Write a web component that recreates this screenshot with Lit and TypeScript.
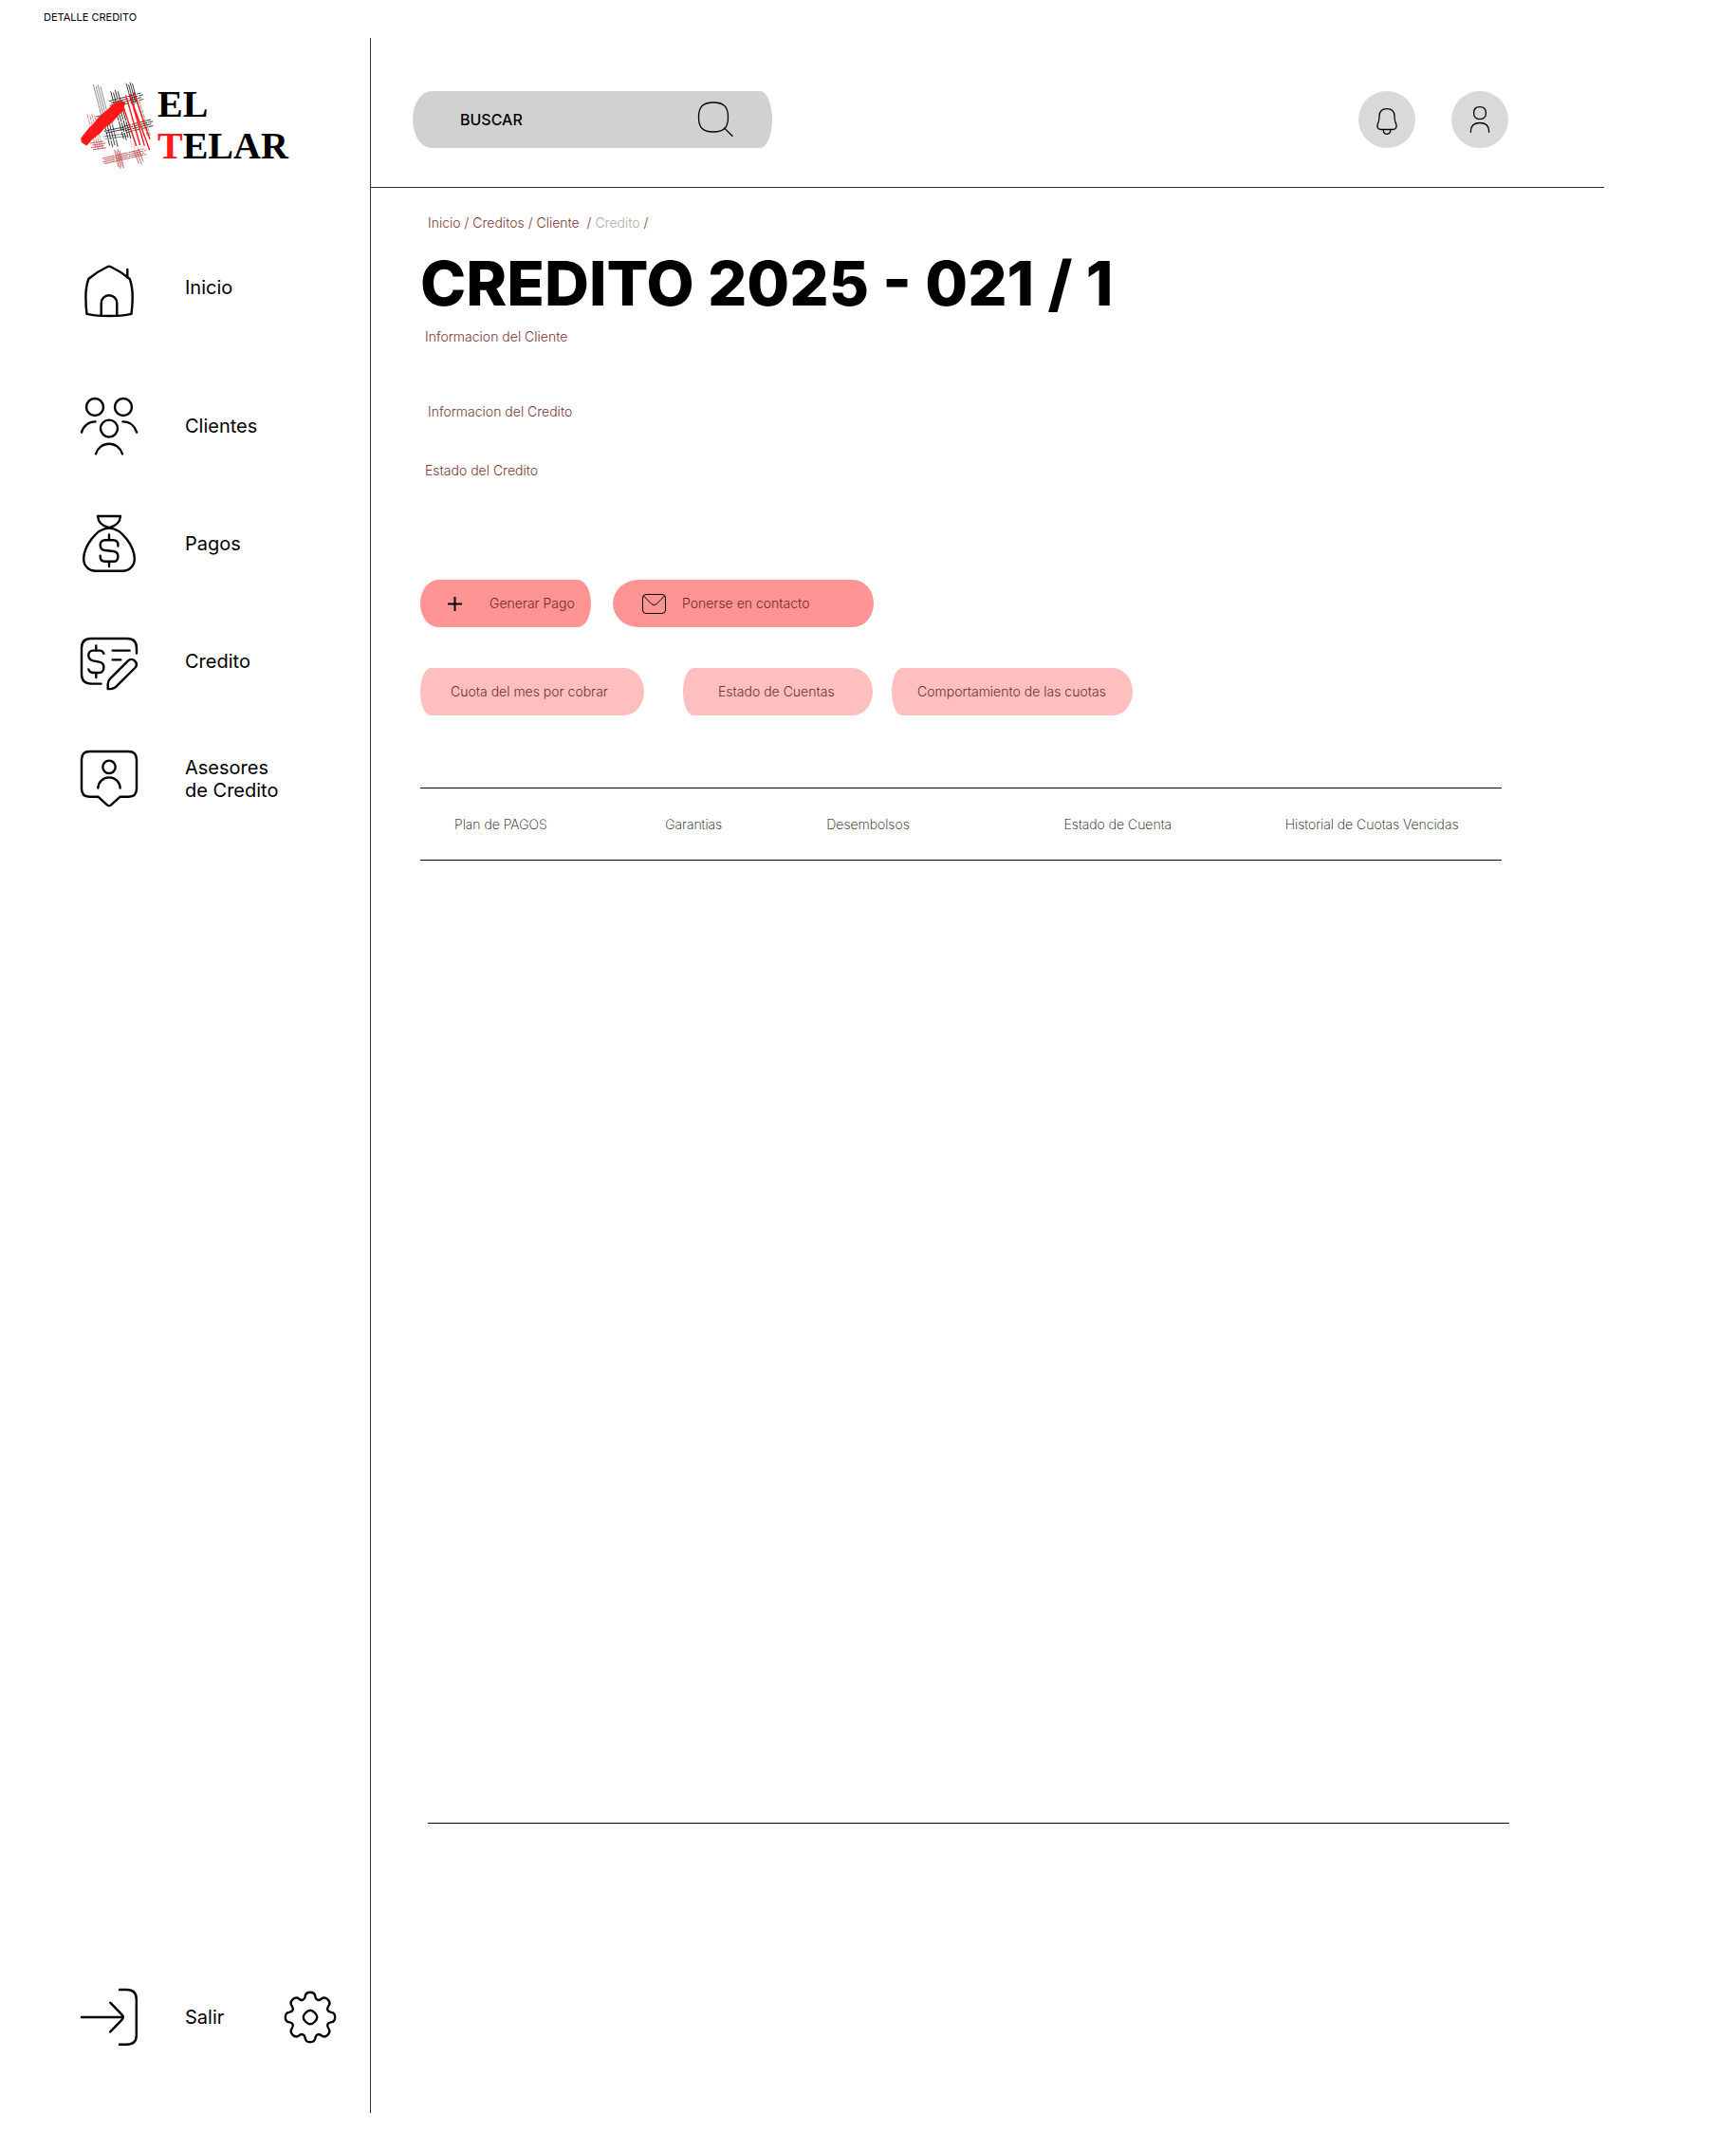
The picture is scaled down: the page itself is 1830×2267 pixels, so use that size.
import { LitElement, html, css, svg } from "lit";
import { customElement, property } from "lit/decorators.js";

/* Parallel threads: n lines starting at (x1,y1)-(x2,y2), each shifted by (dx,dy). */
const threads = (
  x1: number, y1: number, x2: number, y2: number,
  n: number, dx: number, dy: number, color: string, width: number, dash = ""
) =>
  Array.from({ length: n }, (_, i) => {
    const jitter = (i % 2) * 6;
    const len = Math.hypot(x2 - x1, y2 - y1);
    const jx = ((x2 - x1) / len) * jitter;
    const jy = ((y2 - y1) / len) * jitter;
    return svg`<line x1=${x1 + i * dx + jx} y1=${y1 + i * dy + jy} x2=${x2 + i * dx + jx} y2=${y2 + i * dy + jy}
      stroke=${color} stroke-width=${width} stroke-dasharray=${dash} />`;
  });

/* Eight-lobed cog outline around (30,30). */
const cogPath = (() => {
  const lobe = [
    [-5.8, -18.9], [-5.7, -20], [-5.4, -21.8],
    [-5, -24.6], [-3, -26.2], [0, -26.2],
    [3, -26.2], [5, -24.6], [5.4, -21.8],
    [5.7, -20], [5.8, -18.9], [7.6, -18.4],
  ];
  const turn = ([x, y]: number[], a: number) =>
    `${(30 + x * Math.cos(a) - y * Math.sin(a)).toFixed(2)} ${(30 + x * Math.sin(a) + y * Math.cos(a)).toFixed(2)}`;
  let d = `M${turn([-7.6, -18.4], 0)}`;
  for (let k = 0; k < 8; k++) {
    const a = (k * Math.PI) / 4;
    for (let i = 0; i < 12; i += 3) d += `C${lobe.slice(i, i + 3).map((p) => turn(p, a)).join(" ")}`;
  }
  return d + "Z";
})();

const icons = {
  home: svg`<path d="M8.3 21C6.2 27 5.4 34 5.4 40C5.4 47 5.8 53 6.5 57.8C14 59.4 22 60 30 60S46 59.4 53.5 57.8C54.2 53 54.7 47 54.7 40C54.7 34 53.9 27 51.8 21C47 17 37 10.6 31.4 8Q30 7.4 28.6 8C23 10.6 13 17 8.3 21Z"/>
    <path d="M49.3 11V19.5M21.7 59.6V46.5a8.3 8.3 0 0 1 16.6 0V59.6"/>`,
  clients: svg`<circle cx="15" cy="10" r="9"/><circle cx="45" cy="10" r="9"/><circle cx="30" cy="32.6" r="9"/>
    <path d="M1 36.6C3 29.7 8.6 25.3 15.6 25.4M44.4 25.4C51.4 25.3 57 29.7 59.2 36.6M16 59.3C18 53 23.4 48.7 30 48.7S42 53 44 59.3"/>`,
  bag: svg`<path d="M18 1H42C41.6 7 37 11.5 30 13.2C23 11.5 18.4 7 18 1Z"/>
    <path d="M30 13.6C44 13.6 56.8 34 56.8 46C56.8 53.4 51.4 58.7 44 58.7H16C8.6 58.7 3.2 53.4 3.2 46C3.2 34 16 13.6 30 13.6Z"/>
    <path d="M39.4 32.5V31.5C39.4 28.2 37.4 26.2 34.4 26.2H25.7C22.7 26.2 20.7 28.3 20.7 31.2C20.7 34.5 22.4 36.6 25.5 37L34.5 38C37.6 38.4 39.4 40.4 39.4 43.4C39.4 46.7 37.4 48.8 34.4 48.8H25.7C22.7 48.8 20.7 46.8 20.7 43.8V42.8M30 20.5V26M30 49V54"/>`,
  credit: svg`<path d="M59 21.6V16C59 9.5 55.5 6 49 6H11C4.5 6 1 9.5 1 16V43.6C1 50.1 4.5 53.6 11 53.6H21.6"/>
    <path d="M33.7 18.6H51.7M33.7 28.4H42.3M16.3 13.4V18.4M16.3 42.3V47"/>
    <path d="M24.4 21.8C23.7 19.9 22.2 18.6 20.2 18.6H13C10.2 18.6 8.3 20.8 8.3 23.6C8.3 26.7 10.2 28.8 13 29.4L19.4 30.6C22.5 31.2 24.4 33.2 24.4 36.3C24.4 39.7 22.5 42 19.5 42H13.3C10.8 42 9 40.6 8.3 38.4"/>
    <path d="M28.7 59V54C28.7 51.5 29.5 49.8 31 48.3L49.8 29.6C52.3 27.2 55 27.3 57.2 29.6C59.5 31.9 59.5 34.6 57.2 37L38.4 55.7C36 58.3 34.3 59.1 31.5 59.1Z"/>`,
  advisor: svg`<path d="M9.5 1H50.5C56 1 59 4 59 9.5V40.2C59 45.7 56 48.7 50.5 48.7H41.7L32 57.4Q30 59 28 57.4L18.3 48.7H9.5C4 48.7 1 45.7 1 40.2V9.5C1 4 4 1 9.5 1Z"/>
    <circle cx="30" cy="17.3" r="6.7"/><path d="M18.3 39.6C18.6 33 23.6 28.4 30 28.4S41.4 33 41.7 39.6"/>`,
  exit: svg`<path d="M1 30H44M31.2 14.7L43.6 27.4Q46 30 43.6 32.6L31.2 45.4M41 1H48.5C55.5 1 58.8 4.5 58.8 11V49C58.8 55.5 55.5 58.8 48.5 58.8H41"/>`,
  cog: svg`<path d=${cogPath}/><path d="M30 22.7C33 22.7 37.3 27 37.3 30S33 37.3 30 37.3S22.7 33 22.7 30S27 22.7 30 22.7Z"/>`,
  search: svg`<path d="M32 12C43.5 12 47.5 16.8 47.5 27.5S43.5 43 32 43S16.5 38.3 16.5 27.5S20.500 12 32 12Z"/><path d="M43.2 38.6L52.4 47.700"/>`,
  bell: svg`<path d="M30 18.6C34.8 18.6 37.7 21.4 38 26C38.2 29 38 31 39.2 33.4C41.3 37.4 39.8 40.5 36 40.5H24C20.2 40.5 18.7 37.4 20.8 33.4C22 31 21.8 29 22 26C22.3 21.4 25.2 18.6 30 18.6Z"/><path d="M26.3 40.6V41.3C26.3 46.6 33.7 46.6 33.7 41.3V40.6"/>`,
  user: svg`<path d="M30 16.6C34.7 16.6 36.4 18.7 36.4 23S34.7 29.6 30 29.6S23.6 27.4 23.6 23S25.3 16.6 30 16.6Z"/><path d="M20.4 43.8V42.5C20.4 36.5 23.4 33.5 30 33.5S39.6 36.5 39.6 42.5V43.8"/>`,
  plus: svg`<path d="M0 7.5H15M7.5 0V15"/>`,
  mail: svg`<rect x="0.5" y="0.5" width="24" height="20" rx="3.5"/><path d="M1.4 2L9.8 10.5Q12.5 13.2 15.2 10.5L23.6 2"/>`,
};
type IconName = keyof typeof icons;

@customElement("line-icon")
export class LineIcon extends LitElement {
  static styles = css`
    :host { display: block; flex: none; width: 60px; height: 60px; }
    svg {
      display: block; width: 100%; height: 100%; overflow: visible; fill: none;
      stroke: #000; stroke-width: 2.4; stroke-linecap: round; stroke-linejoin: round;
    }
    :host([thin]) svg { stroke-width: 1.3; stroke-linecap: butt; }
    :host([name="plus"]) { width: 15px; height: 15px; }
    :host([name="plus"]) svg { stroke-width: 2; stroke-linecap: butt; }
    :host([name="mail"]) { width: 25px; height: 21px; }
    :host([name="mail"]) svg { stroke-width: 1; }
  `;
  @property({ reflect: true }) name: IconName = "home";
  @property({ type: Boolean, reflect: true }) thin = false;

  render() {
    const box = this.name === "plus" ? "0 0 15 15" : this.name === "mail" ? "0 0 25 21" : "0 0 60 60";
    return html`<svg viewBox=${box} aria-hidden="true">${icons[this.name]}</svg>`;
  }
}

@customElement("brand-logo")
export class BrandLogo extends LitElement {
  static styles = css`
    :host { display: flex; align-items: center; gap: 4px; }
    .weave { display: block; flex: none; width: 77px; height: 97px; }
    .words { font: 700 40px/44px "Liberation Serif", serif; color: #000; }
    .line { display: block; }
    .red { color: #ff1a1a; }
  `;
  render() {
    const dark = "#111";
    const wine = "#b3262b";
    const red = "#ff1717";
    return html`
      <svg class="weave" viewBox="260 250 231 291" fill="none" aria-hidden="true">
        ${threads(300, 268, 326, 368, 4, 7, 0, "#444", 1.8)}
        ${threads(329, 368, 352, 462, 4, 8, -1, dark, 2.4, "22 3")}
        ${threads(355, 290, 396, 440, 4, 7, -2, dark, 2.6, "30 3")}
        ${threads(404, 264, 422, 330, 4, 6, -1.5, dark, 2.4)}
        ${threads(436, 318, 472, 432, 2, 7, -5, "#444", 1.6, "12 3")}
        ${threads(350, 321, 450, 295, 4, 1, 7, dark, 2.4, "26 4")}
        ${threads(400, 400, 482, 379, 4, 0.5, 7, dark, 2.4, "20 3")}
        ${threads(334, 416, 400, 402, 2, 0, 7, dark, 2.4)}
        ${threads(332, 433, 400, 424, 2, 0, 8, "#333", 1.8)}
        ${threads(308, 370, 328, 366, 3, 0, 5, dark, 2)}
        ${threads(281, 362, 308, 470, 4, 7, -1, wine, 1.6, "16 3")}
        ${threads(290, 454, 332, 448, 4, 1, 7, wine, 2.2)}
        ${threads(328, 502, 460, 472, 4, 0.5, 6, wine, 2.2, "40 3")}
        ${threads(367, 474, 380, 530, 4, 5, -1, wine, 2)}
        ${threads(428, 476, 444, 518, 3, 7, -3, wine, 2)}
        ${threads(417, 446, 422, 466, 2, 8, 0, "#999", 1.4)}
        <path d="M396 342L436 462M403 302L448 460M415 298L462 462M416 305L478 475M428 292L479 441" stroke=${red} stroke-width="4.2" />
        <path d="M263 438L285 410L302 393L324 368L347 348L368 328L388 320L399 327L395 340L398 349L382 360L360 385L336 403L320 421L296 440L279 459L270 454L264 449Z" fill=${red} stroke=${red} stroke-width="4" />
      </svg>
      <div class="words">
        <span class="line">EL</span>
        <span class="line"><span class="red">T</span>ELAR</span>
      </div>
    `;
  }
}

interface NavItem { icon: IconName; lines: string[]; }

@customElement("app-root")
export class AppRoot extends LitElement {
  static styles = css`
    *, *::before, *::after { box-sizing: border-box; }
    :host { display: block; font-family: Inter, "Liberation Sans", sans-serif; color: #000; background: #fff; }
    a { color: inherit; text-decoration: none; }
    button { font: inherit; color: inherit; border: 0; padding: 0; background: none; cursor: pointer; text-align: left; }
    h1, h2, p { margin: 0; }

    .page { display: flex; flex-direction: column; min-height: 100vh; padding: 0 139px 40px 0; }
    .frame-name { height: 40px; padding: 10px 0 0 46px; font-size: 11px; line-height: 16px; }
    .body { flex: 1; display: grid; grid-template-columns: 391px minmax(0, 1fr); }

    .sidebar { display: flex; flex-direction: column; padding: 43px 33px 71px 85px; border-right: 1px solid #333; }
    .menu { display: flex; flex-direction: column; gap: 64px; margin-top: 93px; }
    .item { display: flex; align-items: center; gap: 50px; height: 60px; font-size: 20px; line-height: 24px; }
    .menu .item:first-child { margin-bottom: 22px; }
    .line { display: block; }
    .foot { display: flex; justify-content: space-between; margin-top: auto; }

    .main { display: flex; flex-direction: column; }
    .topbar { display: flex; align-items: center; gap: 38px; padding: 56px 101px 41px 44px; border-bottom: 1px solid #333; }
    .search {
      display: flex; align-items: center; flex: 0 1 379px; min-width: 0; height: 60px; margin-right: auto;
      padding: 0 34px 0 50px; background: #d1d1d1; border-radius: 20px 13px 13px 20px / 30px;
    }
    .query { flex: 1; width: 0; border: 0; padding: 0; background: none; outline: none; font: 500 16px/20px Inter, sans-serif; color: #000; }
    .query::placeholder { color: #000; opacity: 1; }
    .round { width: 60px; height: 60px; border-radius: 50%; background: #d9d9d9; }

    .content { flex: 1; display: flex; flex-direction: column; padding: 28px 108px 305px 52px; font-size: 14px; line-height: 18px; font-weight: 300; }
    .crumbs { padding-left: 8px; color: #7d3636; white-space: pre; }
    .current { color: #adadad; }
    .title { margin-top: 17px; font-size: 65px; line-height: 76px; font-weight: 800; }
    .info { padding-left: 5px; font-size: 14px; font-weight: 300; color: #7d3636; }
    .client { margin-top: 9px; }
    .loan { margin-top: 61px; padding-left: 8px; }
    .status { margin-top: 44px; }

    .actions { display: flex; gap: 23px; margin-top: 106px; color: #752626; }
    .action { display: flex; align-items: center; height: 50px; background: #ff9494; }
    .pay { width: 180px; gap: 29px; padding-left: 29px; border-radius: 19px 14px 14px 19px / 25px; }
    .contact { width: 275px; gap: 17px; padding-left: 31px; border-radius: 27px 22px 22px 27px / 25px; }
    .filters { display: flex; margin-top: 43px; color: #752c2c; }
    .filter { height: 50px; background: #ffbfbf; border-radius: 11px 21px 21px 11px / 25px; }
    .due { width: 236px; padding-left: 32px; margin-right: 41px; }
    .accounts { width: 200px; padding-left: 37px; margin-right: 20px; }
    .behaviour { width: 254px; padding-left: 27px; }

    .tabs {
      display: grid; grid-template-columns: 222fr 170fr 250fr 233fr 228fr; align-items: center;
      height: 77px; margin-top: 76px; padding-left: 36px; font-weight: 200;
      border-top: 1px solid #000; border-bottom: 1px solid #000;
    }
    .tab { white-space: nowrap; }
    .panel { flex: 1; margin: 0 -8px 0 8px; border-bottom: 1px solid #000; }
  `;

  private menu: NavItem[] = [
    { icon: "home", lines: ["Inicio"] },
    { icon: "clients", lines: ["Clientes"] },
    { icon: "bag", lines: ["Pagos"] },
    { icon: "credit", lines: ["Credito"] },
    { icon: "advisor", lines: ["Asesores", "de Credito"] },
  ];

  private tabs = ["Plan de PAGOS", "Garantias", "Desembolsos", "Estado de Cuenta", "Historial de Cuotas Vencidas"];

  render() {
    return html`
      <div class="page">
        <p class="frame-name">DETALLE CREDITO</p>
        <div class="body">
          <aside class="sidebar">
            <brand-logo></brand-logo>
            <nav class="menu">
              ${this.menu.map(
                (m) => html`<a class="item" href="#">
                  <line-icon name=${m.icon}></line-icon>
                  <span>${m.lines.map((l) => html`<span class="line">${l}</span>`)}</span>
                </a>`
              )}
            </nav>
            <div class="foot">
              <button class="item"><line-icon name="exit"></line-icon><span>Salir</span></button>
              <button aria-label="Ajustes"><line-icon name="cog"></line-icon></button>
            </div>
          </aside>
          <main class="main">
            <header class="topbar">
              <form class="search" role="search" @submit=${(e: Event) => e.preventDefault()}>
                <input class="query" type="text" aria-label="Buscar" placeholder="BUSCAR" />
                <button aria-label="Buscar"><line-icon name="search" thin></line-icon></button>
              </form>
              <button class="round" aria-label="Notificaciones"><line-icon name="bell" thin></line-icon></button>
              <button class="round" aria-label="Perfil"><line-icon name="user" thin></line-icon></button>
            </header>
            <section class="content">
              <nav class="crumbs"><a href="#">Inicio</a> / <a href="#">Creditos</a> / <a href="#">Cliente</a>  / <a class="current" href="#">Credito</a> /</nav>
              <h1 class="title">CREDITO 2025 - 021 / 1</h1>
              <h2 class="info client">Informacion del Cliente</h2>
              <h2 class="info loan">Informacion del Credito</h2>
              <h2 class="info status">Estado del Credito</h2>
              <div class="actions">
                <button class="action pay"><line-icon name="plus"></line-icon><span>Generar Pago</span></button>
                <button class="action contact"><line-icon name="mail" thin></line-icon><span>Ponerse en contacto</span></button>
              </div>
              <div class="filters">
                <button class="filter due">Cuota del mes por cobrar</button>
                <button class="filter accounts">Estado de Cuentas</button>
                <button class="filter behaviour">Comportamiento de las cuotas</button>
              </div>
              <nav class="tabs">${this.tabs.map((t) => html`<button class="tab">${t}</button>`)}</nav>
              <div class="panel"></div>
            </section>
          </main>
        </div>
      </div>
    `;
  }
}
